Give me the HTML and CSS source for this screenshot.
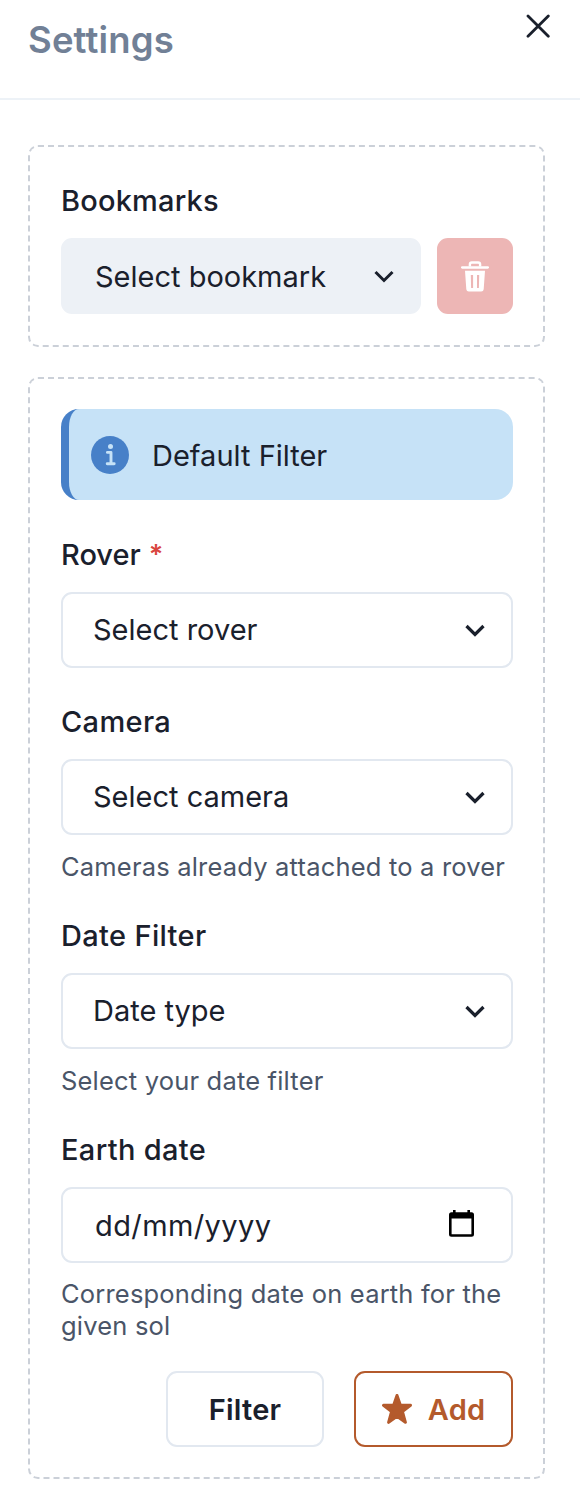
FILE: index.html
```html
<!DOCTYPE html>
<html lang="en">
<head>
<meta charset="utf-8">
<title>Settings</title>
<link rel="stylesheet" href="styles.css">
</head>
<body>
<header class="header">
  <h1 class="title">Settings</h1>
  <button class="close" aria-label="Close"><svg width="24" height="24" viewBox="0 0 24 24"><path d="M2 2 22.3 22.3M22.3 2 2 22.3" fill="none" stroke="currentColor" stroke-width="2.8" stroke-linecap="round"/></svg></button>
</header>
<main class="content">
  <section class="panel">
    <h2 class="label label-bookmarks">Bookmarks</h2>
    <div class="bookmark-row">
      <div class="control control-filled"><span class="value">Select bookmark</span><svg class="chevron" width="20" height="13" viewBox="0 0 20 13"><path d="M1.5 2 10 10.5 18.5 2" fill="none" stroke="currentColor" stroke-width="3"/></svg></div>
      <button class="delete" aria-label="Delete bookmark"><svg width="28" height="31" viewBox="0 0 28 31"><path d="M8.9 5.5V3.3Q8.9 1.5 10.8 1.5H17.2Q19.1 1.5 19.1 3.3V5.5" fill="none" stroke="currentColor" stroke-width="2.4"/><path d="M1.2 6.4H26.8" stroke="currentColor" stroke-width="2.5" stroke-linecap="round"/><path fill="currentColor" fill-rule="evenodd" d="M4 9.8H24L22.7 28.2Q22.5 30.5 20.2 30.5H7.8Q5.5 30.5 5.3 28.2ZM9.8 14 10.1 27H12.1V14ZM16 14V27H17.9L18.2 14Z"/></svg></button>
    </div>
  </section>
  <section class="panel panel-form">
    <div class="alert"><svg class="info" width="38" height="38" viewBox="0 0 38 38"><circle cx="19" cy="19" r="19" fill="#4780c8"/><circle cx="19.5" cy="10.5" r="2.5" fill="#c6e2f7"/><path d="M16.4 16.4H20V27.6M16.2 27.8H23.2" fill="none" stroke="#c6e2f7" stroke-width="2.9" stroke-linecap="round" stroke-linejoin="round"/></svg><span class="alert-text">Default Filter</span></div>
    <div class="field">
      <div class="label label-rover">Rover<span class="required">*</span></div>
      <div class="control"><span class="value">Select rover</span><svg class="chevron" width="20" height="13" viewBox="0 0 20 13"><path d="M1.5 2 10 10.5 18.5 2" fill="none" stroke="currentColor" stroke-width="3.2"/></svg></div>
    </div>
    <div class="field">
      <div class="label">Camera</div>
      <div class="control"><span class="value">Select camera</span><svg class="chevron" width="20" height="13" viewBox="0 0 20 13"><path d="M1.5 2 10 10.5 18.5 2" fill="none" stroke="currentColor" stroke-width="3.2"/></svg></div>
      <p class="helper">Cameras already attached to a rover</p>
    </div>
    <div class="field">
      <div class="label">Date Filter</div>
      <div class="control"><span class="value">Date type</span><svg class="chevron" width="20" height="13" viewBox="0 0 20 13"><path d="M1.5 2 10 10.5 18.5 2" fill="none" stroke="currentColor" stroke-width="3.2"/></svg></div>
      <p class="helper">Select your date filter</p>
    </div>
    <div class="field">
      <div class="label">Earth date</div>
      <div class="control control-date"><span class="value">dd/mm/yyyy</span><svg class="calendar" width="25" height="27" viewBox="0 0 25 27"><path fill-rule="evenodd" d="M4 0H6.6V2.2H18.4V0H21V2.2H22.5Q25 2.2 25 4.7V24.2Q25 26.7 22.5 26.7H2.5Q0 26.7 0 24.2V4.7Q0 2.2 2.5 2.2H4ZM2.6 8.6V24.2H22.4V8.6Z"/></svg></div>
      <p class="helper helper-date">Corresponding date on earth for the<br>given sol</p>
    </div>
    <div class="actions">
      <button class="button filter">Filter</button>
      <button class="button add"><svg width="30" height="30" viewBox="0 0 30 30"><path d="M15 1.5 18.3 11.1 28.5 11.3 20.4 17.5 23.4 28.3 15 22.2 6.6 28.3 9.6 17.5 1.5 11.3 11.7 11.1Z" fill="currentColor" stroke="currentColor" stroke-width="3" stroke-linejoin="round"/></svg><span>Add</span></button>
    </div>
  </section>
</main>
</body>
</html>
```
FILE: styles.css
```css
* { box-sizing: border-box; }
body {
  margin: 0;
  background: #fff;
  color: #1a202c;
  font-family: Inter, "Liberation Sans", sans-serif;
  font-size: 29px;
}
h1, h2, p { margin: 0; }
button { font: inherit; color: inherit; background: none; border: 0; padding: 0; }
svg { display: block; flex: none; }
.header {
  display: flex;
  justify-content: space-between;
  height: 100px;
  padding: 14px 30.5px 0 28px;
  border-bottom: 2px solid #edf2f7;
}
.title { font-size: 36.5px; line-height: 52px; font-weight: 600; letter-spacing: 0.15px; color: #718096; }
.close { height: 24px; width: 24px; }
.content {
  display: flex;
  flex-direction: column;
  gap: 30px;
  padding: 45px 35px 27px 28px;
}
.panel { border: 2px dashed #cbd0d8; border-radius: 10px; padding: 30px 30px 31px 31px; }
.panel-form { padding-bottom: 30px; }
.label { display: flex; gap: 8px; line-height: 47px; height: 46px; font-weight: 500; letter-spacing: 0.34px; }
.label-bookmarks { font-size: 29px; line-height: 48px; letter-spacing: 0.2px; }
.label-rover { letter-spacing: 0; }
.required { color: #d9463f; font-size: 27px; font-weight: 600; }
.bookmark-row { display: flex; gap: 16px; margin-top: 15px; }
.control {
  display: flex;
  flex: 1;
  align-items: center;
  justify-content: space-between;
  height: 76px;
  padding: 0 26px 0 30px;
  border: 2px solid #e2e8f0;
  border-radius: 11px;
}
.control-filled { background: #edf1f6; border-color: #edf1f6; padding: 0 25px 0 32px; }
.field .value { padding-bottom: 2px; }
.control-date { padding: 0 37px 3px 32px; letter-spacing: 0.4px; }
.control-date .value { padding: 4px 0 0; }
.field > .control { margin-top: 15px; }
.delete {
  display: flex;
  align-items: center;
  justify-content: center;
  width: 76px;
  height: 76px;
  border-radius: 11px;
  background: #edb6b5;
  color: #fff;
}
.alert {
  display: flex;
  align-items: center;
  gap: 23px;
  height: 91px;
  margin-bottom: 31px;
  padding-left: 22px;
  border-left: 8px solid #4780c8;
  border-radius: 18px;
  background: #c6e2f7;
}
.alert-text { padding-top: 2px; }
.field + .field { margin-top: 30px; }
.helper { margin-top: 15px; padding-top: 1px; margin-bottom: -1px; font-size: 25.5px; line-height: 32px; letter-spacing: 0.19px; color: #4a5568; white-space: nowrap; }
.helper-date { padding-top: 0; margin-bottom: 0; }
.actions { display: flex; justify-content: flex-end; gap: 30px; margin-top: 29px; }
.button {
  display: flex;
  align-items: center;
  justify-content: center;
  gap: 16px;
  height: 76px;
  border: 2px solid #e2e8f0;
  border-radius: 11px;
  font-weight: 600;
  letter-spacing: 0.2px;
}
.filter { width: 158px; }
.add { width: 159px; color: #b45a2c; border-color: #b45a2c; }
```
